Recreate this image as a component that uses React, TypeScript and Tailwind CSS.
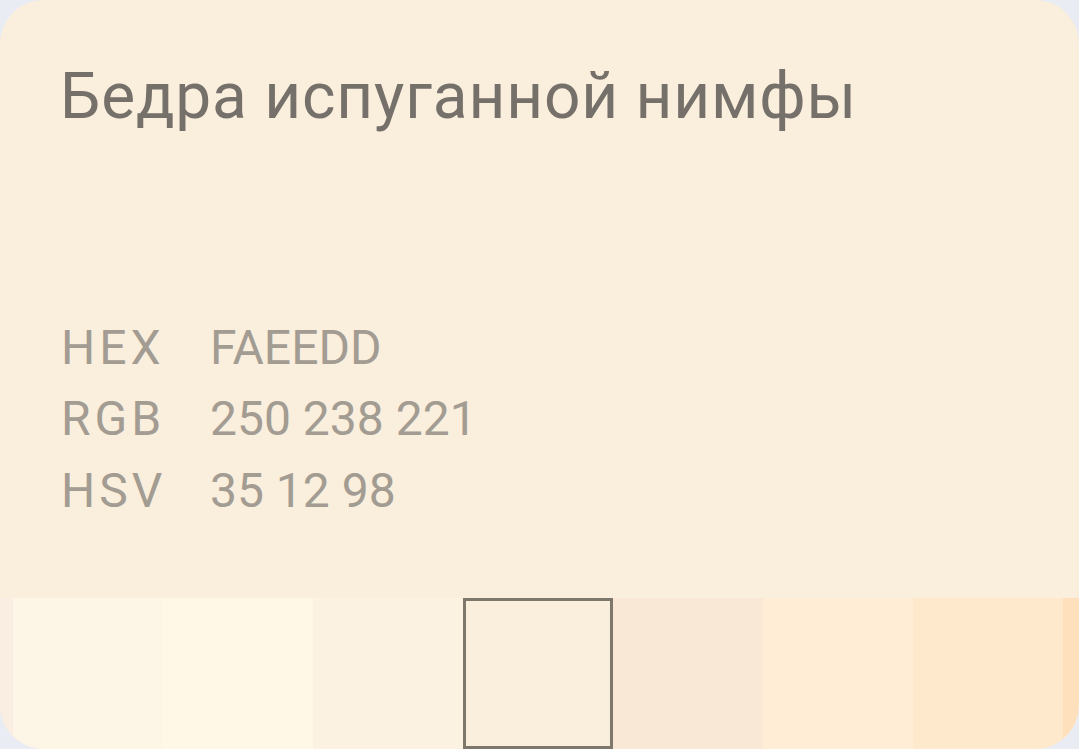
import React from "react";

const swatches = [
  { color: "#faeee3", width: 13 },
  { color: "#fdf5e6", width: 150 },
  { color: "#fff8e7", width: 150 },
  { color: "#fcf2e2", width: 150 },
  { color: "#faeedd", width: 150, selected: true },
  { color: "#f9e8d5", width: 150 },
  { color: "#ffedd5", width: 150 },
  { color: "#ffe9cd", width: 150 },
  { color: "#ffe0bd", width: 150 },
];

const rows = [
  { label: "HEX", value: "FAEEDD" },
  { label: "RGB", value: "250 238 221" },
  { label: "HSV", value: "35 12 98" },
];

export default function App() {
  return (
    <div
      className="w-[1079px] h-[749px] bg-[#e9ecf2] overflow-hidden"
      style={{ fontFamily: "Roboto, 'Noto Sans', sans-serif" }}
    >
      <div className="w-full h-full rounded-[44px] overflow-hidden bg-[#faeedd] flex flex-col">
        <div className="pl-[60px] pt-[65px]">
          <h1 className="text-[64px] leading-none tracking-[0.8px] text-[#76706a] font-normal whitespace-nowrap">
            Бедра испуганной нимфы
          </h1>
        </div>

        <div className="pl-[61px] mt-[183px] flex flex-col">
          {rows.map((r) => (
            <div key={r.label} className="flex h-[71.5px] items-center text-[48px] leading-none text-[#a29c92]">
              <span className="w-[149px] tracking-[4px]">{r.label}</span>
              <span className="tracking-[0px]">{r.value}</span>
            </div>
          ))}
        </div>

        <div className="mt-auto flex h-[151px] shrink-0">
          {swatches.map((s, i) => (
            <div
              key={i}
              className={
                s.selected
                  ? "shrink-0 h-full border-[3px] border-[#7e776c]"
                  : "shrink-0 h-full"
              }
              style={{ width: s.width, backgroundColor: s.color }}
            />
          ))}
        </div>
      </div>
    </div>
  );
}
